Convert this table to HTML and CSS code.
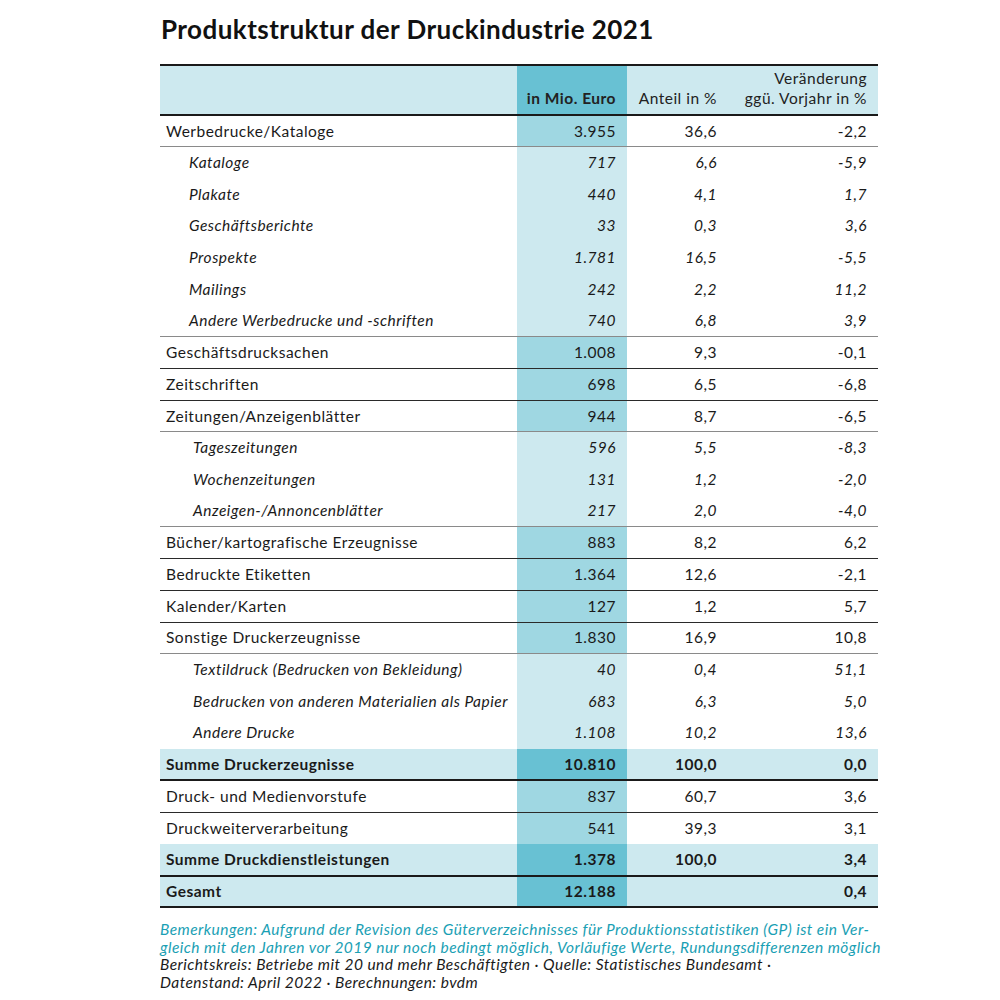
FILE: index.html
```html
<!DOCTYPE html>
<html lang="de">
<head>
<meta charset="utf-8">
<title>Produktstruktur der Druckindustrie 2021</title>
<link rel="stylesheet" href="styles.css">
</head>
<body>
<main class="page">
  <h1 class="title">Produktstruktur der Druckindustrie 2021</h1>
  <table class="data">
    <colgroup>
      <col class="c-label"><col class="c-euro"><col class="c-share"><col class="c-change">
    </colgroup>
    <thead>
      <tr>
        <th class="label"></th>
        <th class="num euro">in Mio. Euro</th>
        <th class="num share">Anteil in %</th>
        <th class="num change">Veränderung<br>ggü. Vorjahr in %</th>
      </tr>
    </thead>
    <tbody>
      <tr class="main lite"><td class="label">Werbedrucke/Kataloge</td><td class="num euro">3.955</td><td class="num">36,6</td><td class="num">-2,2</td></tr>
      <tr class="sub"><td class="label">Kataloge</td><td class="num euro">717</td><td class="num">6,6</td><td class="num">-5,9</td></tr>
      <tr class="sub"><td class="label">Plakate</td><td class="num euro">440</td><td class="num">4,1</td><td class="num">1,7</td></tr>
      <tr class="sub"><td class="label">Geschäftsberichte</td><td class="num euro">33</td><td class="num">0,3</td><td class="num">3,6</td></tr>
      <tr class="sub"><td class="label">Prospekte</td><td class="num euro">1.781</td><td class="num">16,5</td><td class="num">-5,5</td></tr>
      <tr class="sub"><td class="label">Mailings</td><td class="num euro">242</td><td class="num">2,2</td><td class="num">11,2</td></tr>
      <tr class="sub last lite"><td class="label">Andere Werbedrucke und -schriften</td><td class="num euro">740</td><td class="num">6,8</td><td class="num">3,9</td></tr>
      <tr class="main"><td class="label">Geschäftsdrucksachen</td><td class="num euro">1.008</td><td class="num">9,3</td><td class="num">-0,1</td></tr>
      <tr class="main"><td class="label">Zeitschriften</td><td class="num euro">698</td><td class="num">6,5</td><td class="num">-6,8</td></tr>
      <tr class="main lite"><td class="label">Zeitungen/Anzeigenblätter</td><td class="num euro">944</td><td class="num">8,7</td><td class="num">-6,5</td></tr>
      <tr class="sub deep"><td class="label">Tageszeitungen</td><td class="num euro">596</td><td class="num">5,5</td><td class="num">-8,3</td></tr>
      <tr class="sub deep"><td class="label">Wochenzeitungen</td><td class="num euro">131</td><td class="num">1,2</td><td class="num">-2,0</td></tr>
      <tr class="sub deep last lite"><td class="label">Anzeigen-/Annoncenblätter</td><td class="num euro">217</td><td class="num">2,0</td><td class="num">-4,0</td></tr>
      <tr class="main"><td class="label">Bücher/kartografische Erzeugnisse</td><td class="num euro">883</td><td class="num">8,2</td><td class="num">6,2</td></tr>
      <tr class="main"><td class="label">Bedruckte Etiketten</td><td class="num euro">1.364</td><td class="num">12,6</td><td class="num">-2,1</td></tr>
      <tr class="main"><td class="label">Kalender/Karten</td><td class="num euro">127</td><td class="num">1,2</td><td class="num">5,7</td></tr>
      <tr class="main lite"><td class="label">Sonstige Druckerzeugnisse</td><td class="num euro">1.830</td><td class="num">16,9</td><td class="num">10,8</td></tr>
      <tr class="sub deep"><td class="label">Textildruck (Bedrucken von Bekleidung)</td><td class="num euro">40</td><td class="num">0,4</td><td class="num">51,1</td></tr>
      <tr class="sub deep"><td class="label">Bedrucken von anderen Materialien als Papier</td><td class="num euro">683</td><td class="num">6,3</td><td class="num">5,0</td></tr>
      <tr class="sub deep noline"><td class="label">Andere Drucke</td><td class="num euro">1.108</td><td class="num">10,2</td><td class="num">13,6</td></tr>
      <tr class="sum"><td class="label">Summe Druckerzeugnisse</td><td class="num euro">10.810</td><td class="num">100,0</td><td class="num">0,0</td></tr>
      <tr class="main"><td class="label">Druck- und Medienvorstufe</td><td class="num euro">837</td><td class="num">60,7</td><td class="num">3,6</td></tr>
      <tr class="main noline"><td class="label">Druckweiterverarbeitung</td><td class="num euro">541</td><td class="num">39,3</td><td class="num">3,1</td></tr>
      <tr class="sum"><td class="label">Summe Druckdienstleistungen</td><td class="num euro">1.378</td><td class="num">100,0</td><td class="num">3,4</td></tr>
      <tr class="sum"><td class="label">Gesamt</td><td class="num euro">12.188</td><td class="num"></td><td class="num">0,4</td></tr>
    </tbody>
  </table>
  <div class="notes">
    <p class="remark">Bemerkungen: Aufgrund der Revision des Güterverzeichnisses für Produktionsstatistiken (GP) ist ein Ver-<br>gleich mit den Jahren vor 2019 nur noch bedingt möglich, Vorläufige Werte, Rundungsdifferenzen möglich</p>
    <p class="source">Berichtskreis: Betriebe mit 20 und mehr Beschäftigten · Quelle: Statistisches Bundesamt ·<br>Datenstand: April 2022 · Berechnungen: bvdm</p>
  </div>
</main>
</body>
</html>
```
FILE: styles.css
```css
html, body {
  margin: 0;
  padding: 0;
  background: #ffffff;
}
body {
  font-family: Lato, "Open Sans", sans-serif;
  color: #1a1a1a;
}
.page {
  width: 718px;
  padding: 14px 0 0 160px;
}
.title {
  margin: 0 0 20px 1px;
  font-size: 26px;
  font-weight: 700;
  line-height: 30px;
  color: #111;
  letter-spacing: 0.45px;
}
.data {
  width: 718px;
  border-collapse: collapse;
  table-layout: fixed;
  font-size: 15.5px;
  letter-spacing: 0.5px;
  border-top: 2px solid #1a1a1a;
  border-bottom: 2px solid #1a1a1a;
}
.c-label { width: 357px; }
.c-euro { width: 110px; }
.c-share { width: 101px; }
.c-change { width: 150px; }

.data th, .data td {
  padding: 0 11px 0 6px;
  white-space: nowrap;
}
.data thead tr {
  height: 50px;
  background: #cde9ef;
  border-bottom: 2px solid #1a1a1a;
}
.data th {
  vertical-align: bottom;
  padding-bottom: 6px;
  font-weight: 400;
  line-height: 20px;
  color: #222;
}
.data th.euro {
  font-weight: 700;
  background: #68c1d3;
}
.num { text-align: right; }

.data tbody tr {
  height: 31.7px;
}
.data td {
  vertical-align: middle;
  padding-top: 0;
  padding-bottom: 1px;
}
.data tr.main td.euro { background: #9fd7e2; }
.data tr.sub td.euro { background: #cde9ef; }
.data tr.main { border-bottom: 1px solid #2a2a2a; }
.data tr.lite { border-bottom: 1px solid #8a8a8a; }
.data tr.sub td { font-style: italic; }
.data tr.sub td.label { padding-left: 29px; }
.data tr.sub.deep td.label { padding-left: 33px; }
.data tr.noline { border-bottom: none; }
.data tr.sum {
  background: #cde9ef;
  font-weight: 700;
  border-bottom: 2px solid #1a1a1a;
}
.data tr.sum td.euro { background: #68c1d3; }
.data tr.sum td.label { padding-left: 6px; }

.notes {
  margin-top: 13px;
  font-style: italic;
  font-size: 15.5px;
  letter-spacing: 0.45px;
  line-height: 17.5px;
  width: 740px;
  white-space: nowrap;
}
.notes p { margin: 0; }
.remark { color: #1aa0b4; }
.source { color: #1a1a1a; }
```
